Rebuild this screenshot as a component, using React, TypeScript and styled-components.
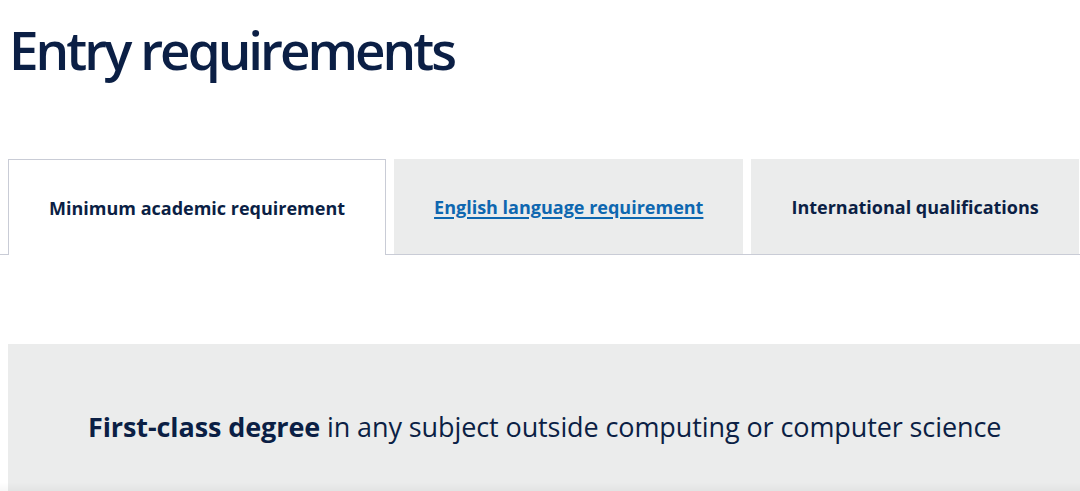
import React from "react";
import styled, { createGlobalStyle } from "styled-components";

const Global = createGlobalStyle`
  html, body { margin: 0; padding: 0; background: #ffffff; }
  body { font-family: "Open Sans", "Noto Sans", sans-serif; color: #0b1f45; overflow: hidden; }
`;

const Page = styled.div`
  padding: 17px 0 0 8px;
`;

const Title = styled.h1`
  margin: 0 0 0 1px;
  font-size: 53px;
  font-weight: 600;
  line-height: 65px;
  letter-spacing: -3px;
  color: #0b1f45;
`;

const TabList = styled.div`
  margin-top: 77px;
  margin-left: -8px;
  padding-left: 8px;
  display: flex;
  gap: 8px;
  border-bottom: 1px solid #c9ccd6;
`;

const Tab = styled.div<{ $active?: boolean }>`
  flex: none;
  box-sizing: border-box;
  padding: 0 40px;
  display: flex;
  align-items: center;
  justify-content: center;
  font-size: 18px;
  font-weight: 700;
  background: ${(p) => (p.$active ? "#ffffff" : "#ebecec")};
  border: ${(p) => (p.$active ? "1px solid #c9ccd6" : "none")};
  border-bottom: none;
  margin-bottom: ${(p) => (p.$active ? "-1px" : "0")};
  height: ${(p) => (p.$active ? "96px" : "95px")};
  color: #0b1f45;
`;

const TabLink = styled.a`
  color: #0e67b0;
  text-decoration: underline;
  text-underline-offset: 3px;
  text-decoration-thickness: 2px;
`;

const Panel = styled.div`
  margin-top: 89px;
  background: #ebecec;
  height: 200px;
  padding-top: 63px;
  box-sizing: border-box;
  padding-left: 80px;
  font-size: 27px;
  line-height: 40px;
  letter-spacing: -0.1px;
  color: #0b1f45;
`;

const Strong = styled.strong`
  font-weight: 700;
`;

const BottomShade = styled.div`
  position: fixed;
  left: 0;
  right: 0;
  bottom: 0;
  height: 8px;
  background: linear-gradient(to bottom, rgba(0, 0, 0, 0), rgba(0, 0, 0, 0.035));
  pointer-events: none;
`;

export default function App() {
  return (
    <>
      <Global />
      <Page>
        <Title>Entry requirements</Title>
        <TabList>
          <Tab $active>Minimum academic requirement</Tab>
          <Tab>
            <TabLink href="#">English language requirement</TabLink>
          </Tab>
          <Tab>International qualifications</Tab>
        </TabList>
        <Panel>
          <Strong>First-class degree</Strong> in any subject outside computing or computer science
        </Panel>
      </Page>
      <BottomShade />
    </>
  );
}
